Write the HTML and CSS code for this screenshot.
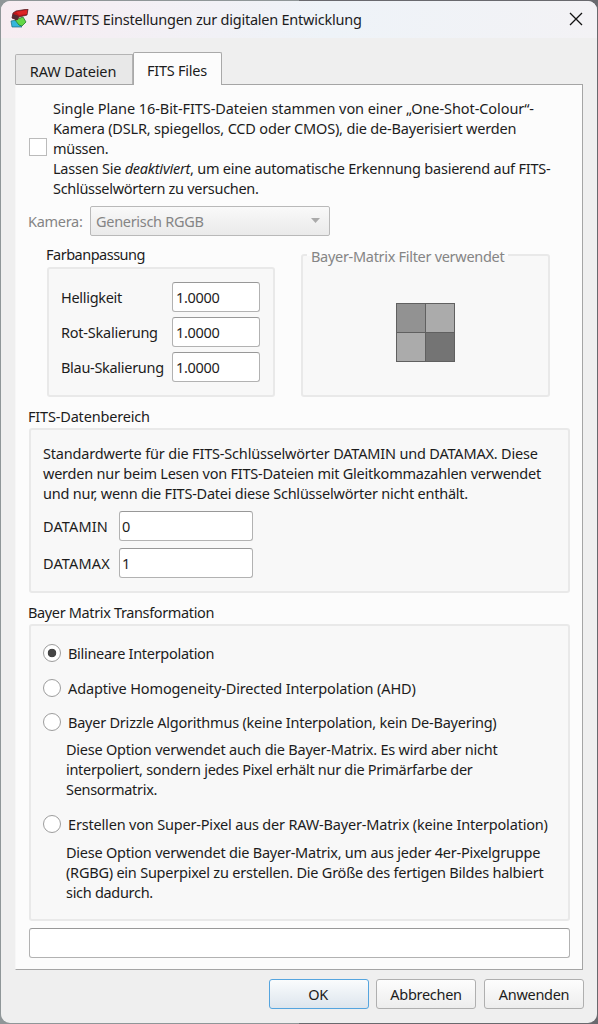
FILE: index.html
```html
<!DOCTYPE html>
<html lang="de">
<head>
<meta charset="utf-8">
<title>RAW/FITS Einstellungen zur digitalen Entwicklung</title>
<link rel="stylesheet" href="styles.css">
</head>
<body>
<div class="window">
  <header class="titlebar">
    <svg class="logo" width="20" height="20" viewBox="0 0 20 20">
      <path d="M1 12 7 11 11 17 12 18 2 18Z" fill="#35b7dc" stroke="#176b80" stroke-width=".7"/>
      <path d="M5 11 13 8 16 13 12 17 9 16Z" fill="#63d747" stroke="#247931" stroke-width=".8"/>
      <path d="M3 4 6 2 18 0 17 6 9 8 7 11 2 9Z" fill="#bd1518" stroke="#552026" stroke-width=".8"/>
      <path d="M6 3 17 1 17 5 9 6Z" fill="#dc2525"/>
      <path d="M3 5 9 7 7 11 2 9Z" fill="#532c32"/>
    </svg>
    <h1 class="title w1">RAW/FITS Einstellungen zur digitalen Entwicklung</h1>
    <svg class="close" width="14" height="14" viewBox="0 0 14 14"><path d="M1 1 13 13M13 1 1 13" stroke="#111" stroke-width="1.3" fill="none"/></svg>
  </header>
  <nav class="tabs">
    <div class="tab w3">RAW Dateien</div>
    <div class="tab tab-active w1">FITS Files</div>
  </nav>
  <main class="panel">
    <label class="plane">
      <span class="checkbox"></span>
      <span class="lines">
        <span class="w4">Single Plane 16-Bit-FITS-Dateien stammen von einer „One-Shot-Colour“-</span>
        <span class="w2">Kamera (DSLR, spiegellos, CCD oder CMOS), die de-Bayerisiert werden</span>
        <span>müssen.</span>
        <span class="w1">Lassen Sie <i>deaktiviert</i>, um eine automatische Erkennung basierend auf FITS-</span>
        <span>Schlüsselwörtern zu versuchen.</span>
      </span>
    </label>
    <div class="camera">
      <span class="camera-label">Kamera:</span>
      <div class="combo"><span>Generisch RGGB</span><svg width="11" height="6" viewBox="0 0 11 6"><path d="M1 0H10L5.5 5Z" fill="#aaa"/></svg></div>
    </div>
    <div class="pair">
      <section class="color">
        <h2 class="label farb">Farbanpassung</h2>
        <div class="group color-group">
          <span>Helligkeit</span><div class="input">1.0000</div>
          <span class="w1">Rot-Skalierung</span><div class="input">1.0000</div>
          <span>Blau-Skalierung</span><div class="input">1.0000</div>
        </div>
      </section>
      <section class="group bayer">
        <h2 class="legend"><span>Bayer-Matrix Filter verwendet</span></h2>
        <div class="matrix"><i class="r"></i><i class="g"></i><i class="g"></i><i class="b"></i></div>
      </section>
    </div>
    <h2 class="label w2">FITS-Datenbereich</h2>
    <section class="group range">
      <div class="lines">
        <span class="w2">Standardwerte für die FITS-Schlüsselwörter DATAMIN und DATAMAX. Diese</span>
        <span class="w1">werden nur beim Lesen von FITS-Dateien mit Gleitkommazahlen verwendet</span>
        <span class="w1">und nur, wenn die FITS-Datei diese Schlüsselwörter nicht enthält.</span>
      </div>
      <div class="fields">
        <span class="w5">DATAMIN</span><div class="input">0</div>
        <span class="w5">DATAMAX</span><div class="input">1</div>
      </div>
    </section>
    <h2 class="label transform-label">Bayer Matrix Transformation</h2>
    <section class="group transform">
      <div class="option"><span class="radio checked"></span><span>Bilineare Interpolation</span></div>
      <div class="option second"><span class="radio"></span><span class="w3">Adaptive Homogeneity-Directed Interpolation (AHD)</span></div>
      <div class="option third"><span class="radio"></span><span class="w1">Bayer Drizzle Algorithmus (keine Interpolation, kein De-Bayering)</span></div>
      <div class="lines desc">
        <span class="w1">Diese Option verwendet auch die Bayer-Matrix. Es wird aber nicht</span>
        <span>interpoliert, sondern jedes Pixel erhält nur die Primärfarbe der</span>
        <span>Sensormatrix.</span>
      </div>
      <div class="option fourth"><span class="radio"></span><span class="w2">Erstellen von Super-Pixel aus der RAW-Bayer-Matrix (keine Interpolation)</span></div>
      <div class="lines desc last-desc">
        <span class="w1">Diese Option verwendet die Bayer-Matrix, um aus jeder 4er-Pixelgruppe</span>
        <span class="w1">(RGBG) ein Superpixel zu erstellen. Die Größe des fertigen Bildes halbiert</span>
        <span>sich dadurch.</span>
      </div>
    </section>
    <div class="input status"></div>
  </main>
  <footer class="buttons">
    <div class="button primary">OK</div>
    <div class="button">Abbrechen</div>
    <div class="button last">Anwenden</div>
  </footer>
</div>
</body>
</html>
```
FILE: styles.css
```css
* { box-sizing: border-box; }
body {
  margin: 0; width: 598px; height: 1024px; overflow: hidden; padding: 1px;
  background: linear-gradient(90deg, #8f9698 50%, #69696e 50%);
  font: 14.5px/20px "Noto Sans", "Open Sans", sans-serif; letter-spacing: -.3px; color: #1c1c1c;
}
h1, h2 { margin: 0; font: inherit; }
span, .input, .button { white-space: nowrap; }
/* tracking steps */
.w1 { letter-spacing: -.23px; }
.w2 { letter-spacing: -.18px; }
.w3 { letter-spacing: -.14px; }
.w4 { letter-spacing: -.08px; }
.w5 { letter-spacing: .15px; }
.window { width: 596px; height: 1022px; background: #efefef; border-radius: 9px; overflow: hidden; }
.titlebar {
  height: 37px; padding: 0 14px 0 9px; display: flex; align-items: center;
  background: linear-gradient(90deg, #f7edf2, #eef3f8 55%, #f3f2f5);
}
.logo { flex: none; margin-top: -2px; }
.title { margin: -1px 0 0 6px; flex: 1; white-space: nowrap; }
.close { flex: none; margin-top: -1px; }
.tabs { height: 46px; padding-left: 14px; display: flex; align-items: flex-end; }
.tab {
  width: 118px; height: 30px; padding: 6px 2px 0 0; text-align: center;
  border: 1px solid #b4b4b4; border-bottom: 0; border-radius: 2px 0 0; background: #e8e8e8;
}
.tab-active {
  width: 89px; height: 33px; margin-bottom: -1px; padding-top: 7px; padding-right: 1px; background: #fcfcfc;
  border-color: #a9a9a9; border-radius: 2px 2px 0 0; position: relative; z-index: 1;
}
.panel {
  width: 568px; height: 886px; margin-left: 14px; padding: 13px 12px 0 13px;
  background: #fcfcfc; border: 1px solid #a5a5a5; border-left-color: #f7f7f7;
}
.lines { display: flex; flex-direction: column; align-items: flex-start; }
.plane { display: flex; height: 100px; }
.checkbox { flex: none; width: 18px; height: 18px; margin: 40px 6px 0 0; border: 1px solid #bbb; background: #fff; }
.camera { display: flex; align-items: center; height: 30px; margin: 8px 0 8px -1px; color: #858585; }
.camera-label { width: 62px; }
.combo {
  width: 240px; height: 30px; padding: 0 8px 0 5px; display: flex; align-items: center; justify-content: space-between;
  border: 1px solid #b9b9b9; border-radius: 2px; background: linear-gradient(#f9f9f9, #eaeaea);
}
.pair { display: flex; height: 153px; }
.color { width: 228px; margin-left: 18px; }
.label { height: 20px; margin-left: -1px; }
.farb { letter-spacing: -.5px; }
.group { border: 2px solid #e9e9e9; border-radius: 3px; background: #f8f8f8; }
.color-group {
  height: 130px; margin-top: 3px; padding: 13px 0 0 12px;
  display: grid; grid-template-columns: 111px 88px; grid-auto-rows: 30px; row-gap: 5px; align-items: center;
}
.input { height: 30px; padding: 4px 3px; background: #fff; border: 1px solid #b2b2b2; border-top-color: #989898; border-radius: 3px; }
.bayer { width: 249px; height: 143px; margin: 10px 0 0 26px; color: #858585; }
.legend { margin: -10px 0 0 4px; }
.legend span { padding: 0 4px; background: linear-gradient(#fcfcfc 50%, #f8f8f8 50%); }
.matrix {
  width: 59px; height: 59px; margin: 37px 0 0 93px; padding: 1px;
  display: grid; grid-template-columns: 28px 28px; grid-template-rows: 28px 28px; gap: 1px; background: #606060;
}
.r { background: #929292; } .g { background: #ababab; } .b { background: #747474; }
.pair + .label { margin-top: 9px; }
.range { width: 541px; height: 165px; margin-top: 2px; padding: 13px 12px; }
.fields { margin-top: 8px; display: grid; grid-template-columns: 76px 134px; grid-auto-rows: 30px; row-gap: 7px; align-items: center; }
.fields .input { padding-left: 2px; }
.transform-label { margin-top: 9px; letter-spacing: -.36px; }
.transform { width: 541px; height: 297px; margin-top: 2px; padding: 17px 12px; }
.option { height: 20px; display: flex; align-items: center; }
.radio { flex: none; width: 18px; height: 18px; margin-right: 7px; border: 1px solid #9d9d9d; border-radius: 50%; background: #fff; }
.checked { background: radial-gradient(circle, #444 0 4px, #fff 4.6px); }
.second { margin-top: 15px; }
.third { margin-top: 14px; }
.desc { margin: 7px 0 0 23px; }
.last-desc { margin-top: 8px; }
.fourth { margin-top: 15px; }
.status { width: 541px; margin: 7px 0 0; }
.buttons { height: 30px; margin-top: 9px; padding-left: 268px; display: flex; gap: 7px; }
.button {
  width: 100px; height: 30px; line-height: 29px; text-align: center;
  border: 1px solid #afafaf; border-radius: 3px; background: linear-gradient(#fdfdfd, #ededed);
}
.primary { padding-right: 2px; border-color: #55a5df; background: linear-gradient(#fafcfd, #dde5ed); }
.last { margin-left: 1px; }
```
